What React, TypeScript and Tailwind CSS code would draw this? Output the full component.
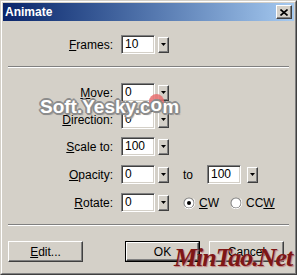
import React from "react";

const font = { fontFamily: '"Liberation Sans", Arial, sans-serif' };

const outline =
  "2px 0 0 #8c8c8c, -2px 0 0 #8c8c8c, 0 2px 0 #8c8c8c, 0 -2px 0 #8c8c8c, 1px 1px 0 #8c8c8c, -1px -1px 0 #8c8c8c, 1px -1px 0 #8c8c8c, -1px 1px 0 #8c8c8c, 2px 2px 1px #a0a0a0";

function Field({ value, width = "w-[34px]" }: { value: string; width?: string }) {
  return (
    <div
      className={`${width} h-[19px] bg-white border border-t-[#808080] border-l-[#808080] border-b-white border-r-white shadow-[inset_1px_1px_0_#404040,inset_-1px_-1px_0_#d4d0c8] pl-[3px] text-[12px] leading-[17px] text-black`}
    >
      {value}
    </div>
  );
}

function Spin() {
  return (
    <div className="w-[11px] h-[16px] bg-[#d4d0c8] border border-t-white border-l-white border-b-[#404040] border-r-[#404040] shadow-[inset_-1px_-1px_0_#808080] flex items-center justify-center">
      <svg width="5" height="3" viewBox="0 0 5 3">
        <path d="M0 0h5L2.5 3z" fill="#000" />
      </svg>
    </div>
  );
}

function Row({ u, rest, value, className = "" }: { u: string; rest: string; value: string; className?: string }) {
  return (
    <div className={`flex items-center ${className}`}>
      <div className="w-[110px] text-right text-[12px] text-black">
        <u>{u}</u>
        {rest}
      </div>
      <div className="ml-[8px]">
        <Field value={value} />
      </div>
      <div className="ml-[3px]">
        <Spin />
      </div>
    </div>
  );
}

function Radio({ checked }: { checked?: boolean }) {
  return (
    <svg width="12" height="12" viewBox="0 0 12 12">
      <circle cx="6" cy="6" r="5.5" fill="#808080" />
      <path d="M1.5 9.9A5.5 5.5 0 0 0 10.4 1.6" stroke="#ffffff" strokeWidth="1" fill="none" />
      <circle cx="6" cy="6" r="4.5" fill="#ffffff" />
      {checked && <circle cx="6" cy="6" r="2" fill="#000" />}
    </svg>
  );
}

function Separator({ className = "" }: { className?: string }) {
  return <div className={`mx-[5px] h-[2px] border-t border-t-[#808080] border-b border-b-white ${className}`} />;
}

function Btn({ children, def }: { children: React.ReactNode; def?: boolean }) {
  return (
    <div className={`w-[75px] h-[21px] ${def ? "border border-black" : ""}`}>
      <div className="w-full h-full bg-[#d4d0c8] border border-t-white border-l-white border-b-[#404040] border-r-[#404040] shadow-[inset_-1px_-1px_0_#808080] flex items-center justify-center text-[12px] text-black">
        {children}
      </div>
    </div>
  );
}

export default function App() {
  return (
    <div className="relative w-[297px] h-[275px] overflow-hidden" style={font}>
      <div className="w-full h-full bg-[#d4d0c8] border border-t-[#d4d0c8] border-l-[#d4d0c8] border-b-[#404040] border-r-[#404040]">
        <div className="w-full h-full border border-t-white border-l-white border-b-[#808080] border-r-[#808080] p-px flex flex-col">
          {/* title bar */}
          <div className="h-[18px] bg-gradient-to-r from-[#0a246a] to-[#a6caf0] flex items-center justify-between pl-[2px] pr-[2px]">
            <span className="text-white font-bold text-[12px]">Animate</span>
            <div className="w-[16px] h-[14px] bg-[#d4d0c8] border border-t-white border-l-white border-b-[#404040] border-r-[#404040] shadow-[inset_-1px_-1px_0_#808080] flex items-center justify-center">
              <svg width="8" height="7" viewBox="0 0 8 7">
                <path d="M0.5 0.5L7.5 6.5M7.5 0.5L0.5 6.5" stroke="#000" strokeWidth="1.6" />
              </svg>
            </div>
          </div>

          <Row className="mt-[14px]" u="F" rest="rames:" value="10" />
          <Separator className="mt-[12px]" />

          <Row className="mt-[15px]" u="M" rest="ove:" value="0" />
          <Row className="mt-[8px]" u="D" rest="irection:" value="0" />
          <Row className="mt-[8px]" u="S" rest="cale to:" value="100" />
          <div className="flex items-center mt-[9px]">
            <Row u="O" rest="pacity:" value="0" />
            <span className="ml-[14px] text-[12px] text-black">to</span>
            <div className="ml-[14px]">
              <Field value="100" />
            </div>
            <div className="ml-[6px]">
              <Spin />
            </div>
          </div>
          <div className="flex items-center mt-[9px]">
            <Row u="R" rest="otate:" value="0" />
            <div className="ml-[14px] flex items-center gap-[4px] text-[12px] text-black">
              <Radio checked />
              <span>
                <u>C</u>W
              </span>
            </div>
            <div className="ml-[11px] flex items-center gap-[4px] text-[12px] text-black">
              <Radio />
              <span>
                CC<u>W</u>
              </span>
            </div>
          </div>

          <Separator className="mt-[12px]" />

          <div className="flex items-center mt-[15px] pl-[5px] pr-[10px]">
            <Btn>
              <u>E</u>dit...
            </Btn>
            <div className="ml-auto flex gap-[9px]">
              <Btn def>OK</Btn>
              <Btn>Cancel</Btn>
            </div>
          </div>
        </div>
      </div>

      {/* watermarks */}
      <div className="absolute left-[40px] top-[94px] flex items-center">
        <span className="text-[19px] font-bold text-white leading-none" style={{ textShadow: outline }}>
          Soft.Yesky.c
        </span>
        <span className="relative inline-block">
          <span className="absolute left-[-2px] top-[0px] w-[15px] h-[15px] rounded-full bg-[#e86e6e] opacity-85" />
          <span className="relative text-[19px] font-bold text-white leading-none" style={{ textShadow: outline }}>
            o
          </span>
        </span>
        <span className="text-[19px] font-bold text-white leading-none" style={{ textShadow: outline }}>
          m
        </span>
      </div>
      <div
        className="absolute left-[174px] top-[245px] text-[26px] font-bold italic text-[#7e1616] leading-none tracking-[-1px]"
        style={{ fontFamily: '"Liberation Serif", "Times New Roman", serif', textShadow: "1px 1px 1px #c08080" }}
      >
        MinTao.Net
      </div>
    </div>
  );
}
